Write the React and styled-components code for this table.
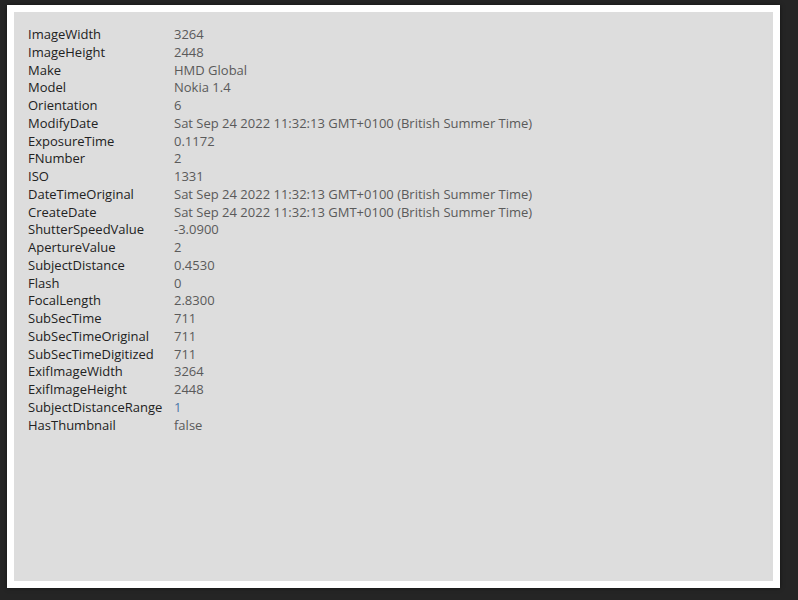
import React from 'react';
import styled, { createGlobalStyle } from 'styled-components';

const GlobalStyle = createGlobalStyle`
    html, body {
        margin: 0;
        padding: 0;
        background: #252525;
    }
`;

const Page = styled.div`
    width: 798px;
    height: 600px;
    box-sizing: border-box;
    padding: 5px 18px 12px 7px;
    background: #252525;
`;

const Frame = styled.div`
    height: 100%;
    box-sizing: border-box;
    padding: 7px;
    background: #ffffff;
    box-shadow: 0 0 4px rgba(0, 0, 0, 0.5);
`;

const Panel = styled.div`
    height: 100%;
    box-sizing: border-box;
    padding: 14px 14px;
    background: #dddddd;
`;

const ExifTable = styled.div`
    display: grid;
    grid-template-columns: 146px auto;
    font-family: "Open Sans", sans-serif;
    font-size: 13px;
    line-height: 17.75px;
`;

const Key = styled.div`
    color: #222222;
`;

const Value = styled.div`
    color: ${(p) => (p.$number ? '#4a78a8' : '#5a5a5a')};
`;

const rows = [
    ['ImageWidth', '3264'],
    ['ImageHeight', '2448'],
    ['Make', 'HMD Global'],
    ['Model', 'Nokia 1.4'],
    ['Orientation', '6'],
    ['ModifyDate', 'Sat Sep 24 2022 11:32:13 GMT+0100 (British Summer Time)'],
    ['ExposureTime', '0.1172'],
    ['FNumber', '2'],
    ['ISO', '1331'],
    ['DateTimeOriginal', 'Sat Sep 24 2022 11:32:13 GMT+0100 (British Summer Time)'],
    ['CreateDate', 'Sat Sep 24 2022 11:32:13 GMT+0100 (British Summer Time)'],
    ['ShutterSpeedValue', '-3.0900'],
    ['ApertureValue', '2'],
    ['SubjectDistance', '0.4530'],
    ['Flash', '0'],
    ['FocalLength', '2.8300'],
    ['SubSecTime', '711'],
    ['SubSecTimeOriginal', '711'],
    ['SubSecTimeDigitized', '711'],
    ['ExifImageWidth', '3264'],
    ['ExifImageHeight', '2448'],
    ['SubjectDistanceRange', '1', true],
    ['HasThumbnail', 'false'],
];

const App = () => {
    return (
        <Page>
            <GlobalStyle />
            <Frame>
                <Panel>
                    <ExifTable>
                        {rows.map(([key, value, blue]) => (
                            <React.Fragment key={key}>
                                <Key>{key}</Key>
                                <Value $number={blue}>{value}</Value>
                            </React.Fragment>
                        ))}
                    </ExifTable>
                </Panel>
            </Frame>
        </Page>
    );
};

export default App;
